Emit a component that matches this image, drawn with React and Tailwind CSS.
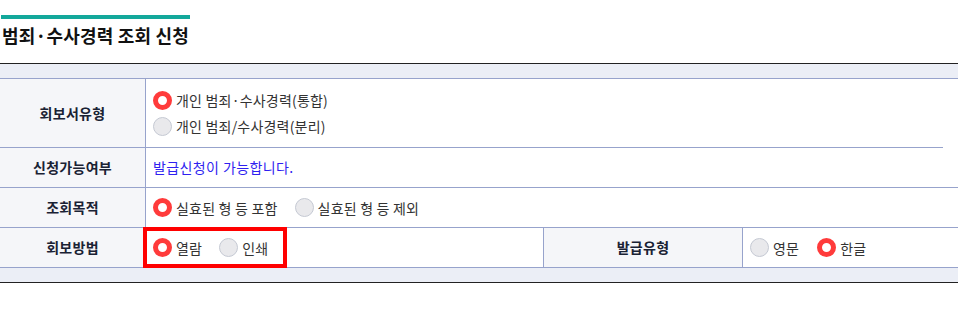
import React from "react";

const FONT = { fontFamily: '"Noto Sans CJK KR", "Noto Sans", sans-serif' };

function Radio({ checked }) {
  return checked ? (
    <span className="box-border inline-block h-[19px] w-[19px] shrink-0 rounded-full border-[5px] border-[#ff3b3b] bg-white" />
  ) : (
    <span className="box-border inline-block h-[19px] w-[19px] shrink-0 rounded-full border border-[#c5c9d3] bg-[#e9e9ec]" />
  );
}

function Option({ checked, label, className = "" }) {
  return (
    <span className={"flex items-center " + className}>
      <Radio checked={checked} />
      <span className="ml-[4px] text-[14px] leading-none tracking-[0.2px] text-[#333]">{label}</span>
    </span>
  );
}

function Label({ children, className = "" }) {
  return (
    <div
      className={
        "flex items-center justify-center bg-[#f5f6f9] text-[14px] font-bold tracking-[0.3px] text-[#1a2234] " + className
      }
    >
      {children}
    </div>
  );
}

export default function App() {
  return (
    <div className="w-[958px] bg-white" style={FONT}>
      <div className="pt-[15px]">
        <div className="ml-[1px] h-[4px] w-[189px] bg-[#13a89b]" />
        <h2 className="mt-[5px] pl-[2px] text-[18px] font-bold leading-[22px] tracking-[0.2px] text-[#111]">
          범죄·수사경력 조회 신청
        </h2>
      </div>

      <div className="mt-[17px] border-t border-[#222]">
        <div className="h-[15px] border-b border-[#97a3cc] bg-[#ebeef6]" />

        {/* Row 1 */}
        <div className="flex h-[68px]">
          <Label className="w-[146px] border-r border-[#97a3cc]">회보서유형</Label>
          <div className="flex flex-1 flex-col justify-center pl-[7px]">
            <Option checked className="h-[26px]" label="개인 범죄·수사경력(통합)" />
            <Option className="h-[26px]" label="개인 범죄/수사경력(분리)" />
          </div>
        </div>
        <div className="h-px w-[943px] bg-[#97a3cc]" />

        {/* Row 2 */}
        <div className="flex h-[40px] border-b border-[#97a3cc]">
          <Label className="w-[146px] border-r border-[#97a3cc]">신청가능여부</Label>
          <div className="flex flex-1 items-center pl-[7px] text-[14px] tracking-[0.4px] text-[#2f1ff0]">
            발급신청이 가능합니다.
          </div>
        </div>

        {/* Row 3 */}
        <div className="flex h-[40px] border-b border-[#97a3cc]">
          <Label className="w-[146px] border-r border-[#97a3cc]">조회목적</Label>
          <div className="flex flex-1 items-center pl-[7px]">
            <Option checked label="실효된 형 등 포함" />
            <Option className="ml-[17px]" label="실효된 형 등 제외" />
          </div>
        </div>

        {/* Row 4 */}
        <div className="flex h-[40px] border-b border-[#97a3cc]">
          <Label className="w-[146px] border-r border-[#97a3cc]">회보방법</Label>
          <div className="relative flex w-[398px] items-center border-r border-[#97a3cc] pl-[7px]">
            <Option checked label="열람" />
            <Option className="ml-[17px]" label="인쇄" />
            <div className="pointer-events-none absolute left-[-3px] top-[-1px] h-[41px] w-[144px] border-[4px] border-[#ff0000]" />
          </div>
          <Label className="w-[199px] border-r border-[#97a3cc]">발급유형</Label>
          <div className="flex flex-1 items-center pl-[7px]">
            <Option label="영문" />
            <Option checked className="ml-[18px]" label="한글" />
          </div>
        </div>

        <div className="h-[15px] border-b border-[#222] bg-[#ebeef6]" />
      </div>
    </div>
  );
}
